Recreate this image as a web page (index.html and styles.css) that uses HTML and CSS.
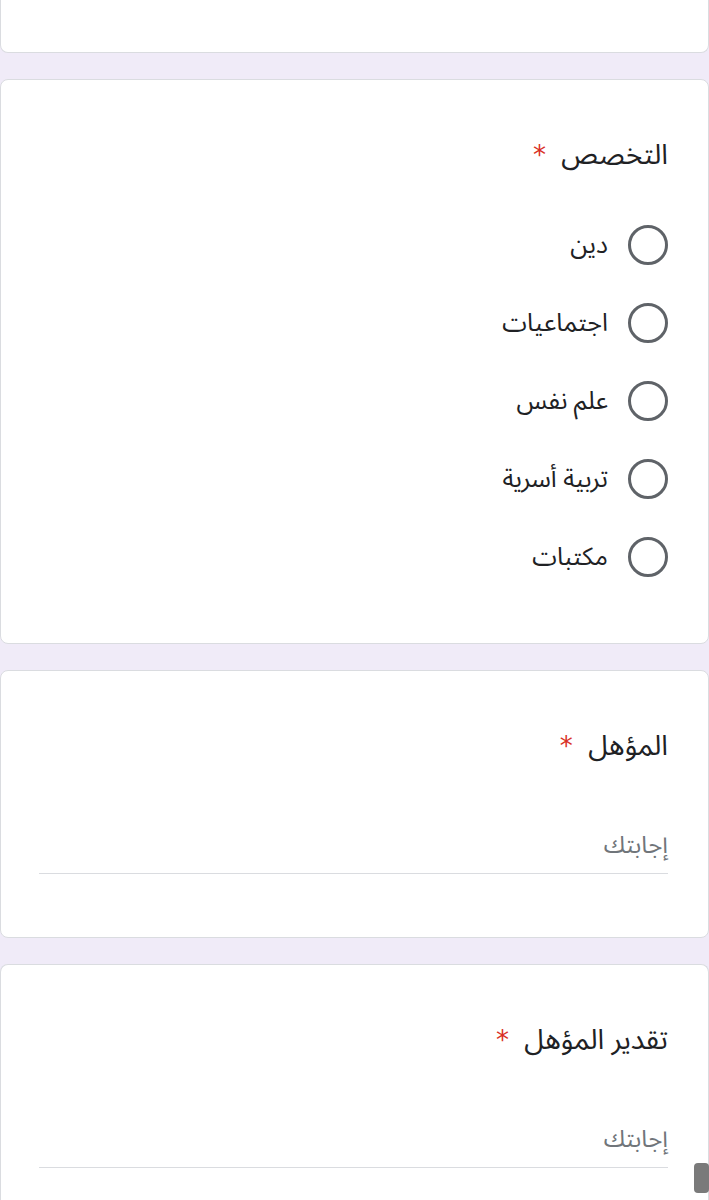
FILE: index.html
```html
<!DOCTYPE html>
<html lang="ar" dir="rtl">
<head>
<meta charset="utf-8">
<title>نموذج</title>
<link rel="stylesheet" href="styles.css">
</head>
<body>
<div class="page">
  <div class="card card-top"></div>

  <section class="card q-radio">
    <h2 class="q-title">التخصص <span class="req">*</span></h2>
    <ul class="options">
      <li class="option"><span class="radio"></span><span class="opt-label">دين</span></li>
      <li class="option"><span class="radio"></span><span class="opt-label">اجتماعيات</span></li>
      <li class="option"><span class="radio"></span><span class="opt-label">علم نفس</span></li>
      <li class="option"><span class="radio"></span><span class="opt-label">تربية أسرية</span></li>
      <li class="option"><span class="radio"></span><span class="opt-label">مكتبات</span></li>
    </ul>
  </section>

  <section class="card q-text">
    <h2 class="q-title">المؤهل <span class="req">*</span></h2>
    <div class="answer"><span class="placeholder">إجابتك</span></div>
  </section>

  <section class="card q-text q-last">
    <h2 class="q-title">تقدير المؤهل <span class="req">*</span></h2>
    <div class="answer"><span class="placeholder">إجابتك</span></div>
  </section>
</div>
<div class="scroll-thumb"></div>
</body>
</html>
```

FILE: styles.css
```css
html, body {
  margin: 0;
  padding: 0;
}
body {
  background: #f0ebf8;
  font-family: "Noto Sans Arabic", "DejaVu Sans", "Noto Sans", sans-serif;
  color: #202124;
  overflow: hidden;
  height: 1200px;
}
.page {
  display: flex;
  flex-direction: column;
  gap: 26px;
}
.card {
  background: #fff;
  border: 1px solid #dadce0;
  border-radius: 8px;
  box-sizing: border-box;
}
.card-top {
  height: 53px;
  border-top: none;
  border-radius: 0 0 8px 8px;
}
.q-title {
  margin: 0;
  font-weight: normal;
  font-size: 28px;
  line-height: 36px;
  padding: 0 40px;
}
.req {
  color: #d93025;
  font-family: "DejaVu Sans", sans-serif;
  font-size: 26px;
  margin-right: 8px;
}
.q-radio {
  height: 565px;
  padding-top: 57px;
}
.options {
  list-style: none;
  margin: 32px 0 0;
  padding: 0 40px;
}
.option {
  display: flex;
  align-items: center;
  gap: 20px;
  height: 78px;
}
.radio {
  width: 40px;
  height: 40px;
  box-sizing: border-box;
  border: 3px solid #5f6368;
  border-radius: 50%;
  flex: none;
}
.opt-label {
  font-size: 25px;
  line-height: 30px;
}
.q-text {
  height: 268px;
  padding-top: 57px;
}
.q-last {
  height: 237px;
  border-bottom: none;
  border-radius: 8px 8px 0 0;
}
.answer {
  margin: 65px 40px 0 38px;
  padding-bottom: 8px;
  border-bottom: 1px solid #dadce0;
}
.placeholder {
  font-size: 24px;
  line-height: 32px;
  color: #70757a;
}
.scroll-thumb {
  position: fixed;
  right: 0;
  top: 1163px;
  width: 15px;
  height: 30px;
  background: #7a7a7a;
  border-radius: 4px;
}
```
